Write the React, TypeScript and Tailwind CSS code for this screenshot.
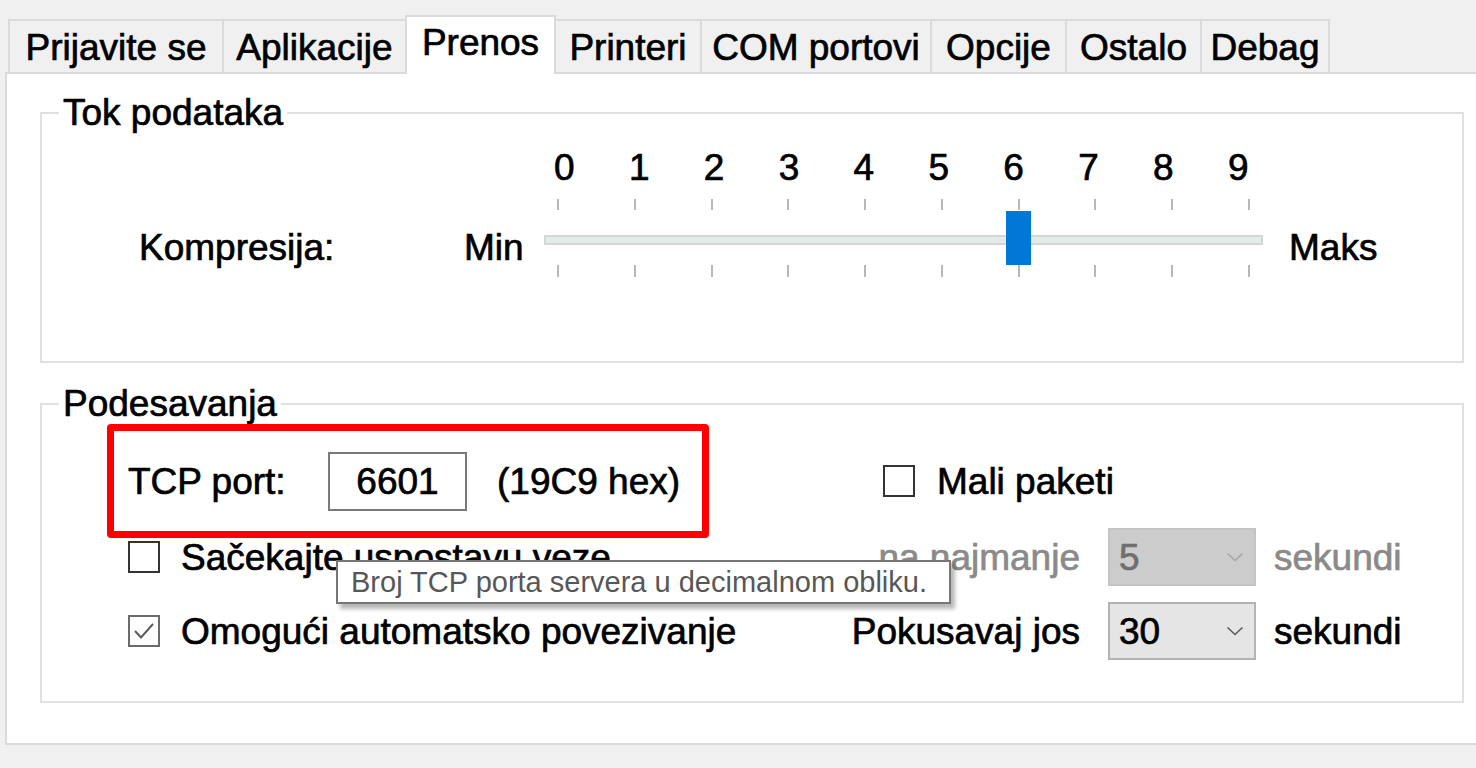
import React from 'react';

const TABS = ['Prijavite se', 'Aplikacije', 'Prenos', 'Printeri', 'COM portovi', 'Opcije', 'Ostalo', 'Debag'];
const TAB_WIDTHS: Record<string, string> = {
  'Prijavite se': 'w-[214px]',
  Aplikacije: 'w-[183px]',
  Prenos: 'w-[151px]',
  Printeri: 'w-[144px]',
  'COM portovi': 'w-[230px]',
  Opcije: 'w-[135px]',
  Ostalo: 'w-[135px]',
  Debag: 'w-[130px]',
};
const SELECTED = 'Prenos';

// Compression levels shown above the slider
const LEVELS = [0, 1, 2, 3, 4, 5, 6, 7, 8, 9];

function Chevron({ disabled }: { disabled?: boolean }) {
  return (
    <svg width="18" height="10" viewBox="0 0 18 10" className="shrink-0">
      <path
        d="M1.5 1.5 L9 8.5 L16.5 1.5"
        fill="none"
        stroke={disabled ? '#a6a6a6' : '#5a5a5a'}
        strokeWidth="1.6"
      />
    </svg>
  );
}

function Checkbox({ checked }: { checked?: boolean }) {
  return (
    <div
      className={`w-[32px] h-[32px] shrink-0 bg-white border-2 flex items-center justify-center ${
        checked ? 'border-[#6b6b6b]' : 'border-[#333333]'
      }`}
    >
      {checked && (
        <svg width="26" height="26" viewBox="0 0 26 26">
          <path d="M4 13 L10 19.5 L22 6" fill="none" stroke="#5c5c5c" strokeWidth="2" />
        </svg>
      )}
    </div>
  );
}

function Combo({ value, disabled }: { value: string; disabled?: boolean }) {
  return (
    <div
      className={`w-[148px] h-[58px] border-2 flex items-center justify-between pl-[9px] pr-[10px] ${
        disabled ? 'bg-[#cccccc] border-[#c4c4c4] text-[#6f6f6f]' : 'bg-[#e5e5e5] border-[#b3b3b3] text-black'
      }`}
    >
      <span>{value}</span>
      <Chevron disabled={disabled} />
    </div>
  );
}

export default function App() {
  return (
    <div
      className="relative w-[1476px] h-[768px] overflow-hidden bg-[#f0f0f0] text-black text-[37px] leading-[37px] [-webkit-text-stroke:0.7px_currentColor]"
      style={{ fontFamily: '"Liberation Sans", Arial, sans-serif' }}
    >
      {/* Tab strip */}
      <div className="flex items-end h-[72px] pl-[8px]">
        {TABS.map((tab, i) => {
          const selected = tab === SELECTED;
          const afterSelected = TABS[i - 1] === SELECTED;
          return (
            <div
              key={tab}
              className={`${TAB_WIDTHS[tab]} flex justify-center whitespace-nowrap border-t-2 border-[#dadada] ${
                selected
                  ? 'h-[59px] pt-[7px] bg-white border-x-2 relative z-10 -mb-[2px]'
                  : `h-[53px] pt-[8px] bg-[#f0f0f0] ${afterSelected ? '' : 'border-l-2'} ${
                      i === TABS.length - 1 ? 'border-r-2' : ''
                    }`
              }`}
            >
              {tab}
            </div>
          );
        })}
      </div>

      {/* Tab panel */}
      <div className="ml-[5px] w-[1480px] h-[673px] bg-white border-2 border-r-0 border-[#dadada] pt-[20px]">
        {/* Tok podataka */}
        <fieldset className="ml-[33px] w-[1424px] h-[269px] border-2 border-[#e0e0e0]">
          <legend className="ml-[17px] px-[4px]">Tok podataka</legend>
          <div className="flex items-start mt-[18px]">
            <span className="ml-[97px] w-[325px] mt-[80px]">Kompresija:</span>
            <span className="w-[80px] mt-[80px]">Min</span>
            <div className="w-[719px] flex flex-col">
              <div className="flex justify-between pl-[10px] pr-[15px] h-[37px]">
                {LEVELS.map((n) => (
                  <span key={n} className="w-[20px] text-center">
                    {n}
                  </span>
                ))}
              </div>
              <div className="flex justify-between px-[13px] mt-[13px] h-[11px]">
                {LEVELS.map((n) => (
                  <span key={n} className="w-[2px] h-[11px] bg-[#b8b8b8]" />
                ))}
              </div>
              <div className="relative h-[54px] mt-[1px] pt-[24px]">
                <div className="h-[10px] bg-[#e7eaea] border-2 border-[#d6d6d6]" />
                <div className="absolute left-[462px] top-0 w-[25px] h-[54px] bg-[#0078d7]" />
              </div>
              <div className="flex justify-between px-[13px] h-[12px]">
                {LEVELS.map((n) => (
                  <span key={n} className="w-[2px] h-[12px] bg-[#b8b8b8]" />
                ))}
              </div>
            </div>
            <span className="ml-[26px] mt-[80px]">Maks</span>
          </div>
        </fieldset>

        {/* Podesavanja */}
        <fieldset className="ml-[33px] mt-[22px] w-[1424px] h-[318px] border-2 border-[#e0e0e0]">
          <legend className="ml-[17px] px-[4px]">Podesavanja</legend>
          <div className="flex items-center mt-[2px]">
            <div className="ml-[65px] w-[602px] h-[114px] border-[7px] border-[#ff0000] rounded-[4px] flex items-center pl-[14px]">
              <span className="w-[200px]">TCP port:</span>
              <div className="w-[139px] h-[59px] border-2 border-[#7a7a7a] bg-white flex items-center justify-center">
                6601
              </div>
              <span className="ml-[30px]">(19C9 hex)</span>
            </div>
            <div className="ml-[174px] flex items-center">
              <Checkbox />
              <span className="ml-[22px]">Mali paketi</span>
            </div>
          </div>

          <div className="flex flex-col gap-[16px] -mt-[10px]">
            <div className="flex items-center h-[58px]">
              <div className="ml-[86px] w-[672px] flex items-center">
                <Checkbox />
                <span className="ml-[21px] whitespace-nowrap">Sačekajte uspostavu veze</span>
              </div>
              <span className="w-[280px] text-right text-[#8a8a8a] whitespace-nowrap">na najmanje</span>
              <div className="ml-[28px]">
                <Combo value="5" disabled />
              </div>
              <span className="ml-[18px] text-[#8a8a8a]">sekundi</span>
            </div>
            <div className="flex items-center h-[58px]">
              <div className="ml-[86px] w-[672px] flex items-center">
                <Checkbox checked />
                <span className="ml-[21px] whitespace-nowrap">Omogući automatsko povezivanje</span>
              </div>
              <span className="w-[280px] text-right whitespace-nowrap">Pokusavaj jos</span>
              <div className="ml-[28px]">
                <Combo value="30" />
              </div>
              <span className="ml-[18px]">sekundi</span>
            </div>
          </div>
        </fieldset>
      </div>

      {/* Tooltip over the settings */}
      <div className="absolute left-[336px] top-[560px] w-[615px] h-[44px] bg-white border-2 border-[#767676] shadow-[4px_5px_4px_rgba(0,0,0,0.28)] flex items-center pl-[13px] text-[29px] leading-[29px] text-[#575757] whitespace-nowrap [-webkit-text-stroke:0px]">
        Broj TCP porta servera u decimalnom obliku.
      </div>
    </div>
  );
}
